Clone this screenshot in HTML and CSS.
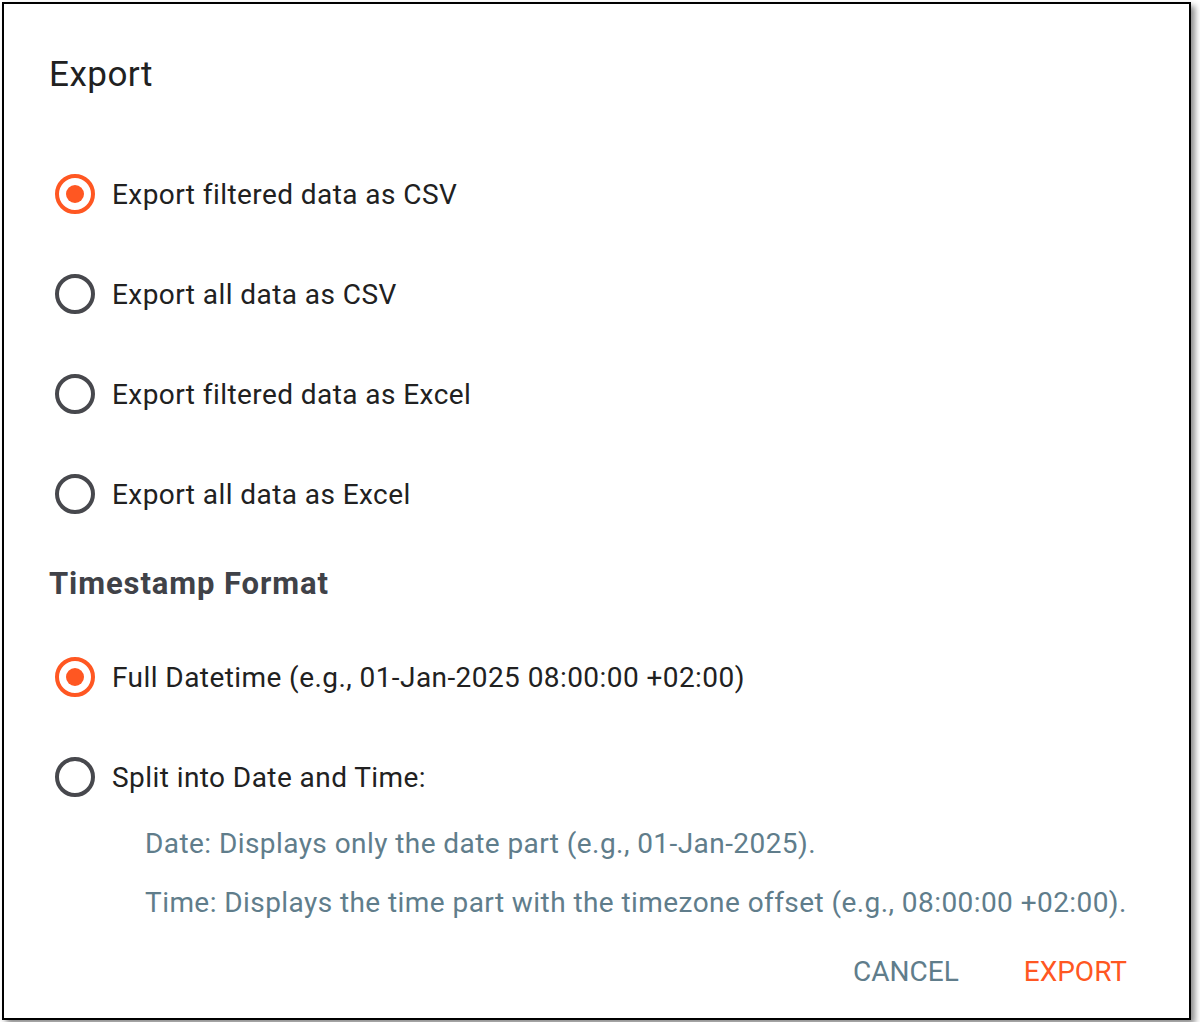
FILE: index.html
```html
<!DOCTYPE html>
<html lang="en">
<head>
  <meta charset="UTF-8" />
  <meta name="viewport" content="width=device-width, initial-scale=1" />
  <title>Export</title>
  <link rel="stylesheet" href="styles.css">
</head>
<body>
  <div class="dialog">
    <h1 class="title">Export</h1>

    <div class="options">
      <label class="option"><span class="radio checked"></span>Export filtered data as CSV</label>
      <label class="option"><span class="radio"></span>Export all data as CSV</label>
      <label class="option"><span class="radio"></span>Export filtered data as Excel</label>
      <label class="option"><span class="radio"></span>Export all data as Excel</label>
    </div>

    <h2 class="subheading">Timestamp Format</h2>

    <div class="options">
      <label class="option"><span class="radio checked"></span>Full Datetime (e.g., 01-Jan-2025 08:00:00 +02:00)</label>
      <label class="option"><span class="radio"></span>Split into Date and Time:</label>
    </div>

    <div class="hint">
      <p>Date: Displays only the date part (e.g., 01-Jan-2025).</p>
      <p>Time: Displays the time part with the timezone offset (e.g., 08:00:00 +02:00).</p>
    </div>

    <div class="actions">
      <button class="btn btn-cancel">CANCEL</button>
      <button class="btn btn-export">EXPORT</button>
    </div>
  </div>
</body>
</html>
```

FILE: styles.css
```css
body {
  margin: 0;
  padding: 2px;
  background: #fff;
  font-family: Roboto, "Liberation Sans", sans-serif;
}
.dialog {
  width: 1189px;
  height: 1018px;
  box-sizing: border-box;
  border: 2px solid #000;
  box-shadow: 4px 4px 6px rgba(0,0,0,0.45);
  background: #fff;
  display: flex;
  flex-direction: column;
}
.title {
  margin: 51px 0 0;
  padding-left: 45px;
  font-size: 35px;
  line-height: 40px;
  letter-spacing: 0.5px;
  font-weight: 400;
  color: #212121;
}
.options {
  display: flex;
  flex-direction: column;
}
.title + .options {
  margin-top: 49px;
}
.option {
  height: 100px;
  display: flex;
  align-items: center;
  gap: 17px;
  padding-left: 51px;
  font-size: 28px;
  letter-spacing: 0.43px;
  color: #212121;
  cursor: pointer;
}
.radio {
  width: 40px;
  height: 40px;
  box-sizing: border-box;
  border: 4px solid #47484d;
  border-radius: 50%;
  display: flex;
  align-items: center;
  justify-content: center;
  flex: none;
}
.radio.checked {
  border-color: #ff5722;
}
.radio.checked::after {
  content: "";
  width: 18px;
  height: 18px;
  border-radius: 50%;
  background: #ff5722;
}
.subheading {
  margin: 20px 0 23px;
  padding-left: 45px;
  font-size: 31px;
  line-height: 40px;
  letter-spacing: 0.9px;
  font-weight: 700;
  color: #404248;
}
.hint {
  padding-left: 141px;
  color: #607d8b;
  font-size: 28px;
  letter-spacing: 0.43px;
}
.hint p {
  margin: 0;
  line-height: 34px;
}
.hint p + p {
  margin-top: 25px;
}
.actions {
  margin-top: auto;
  padding: 0 62px 29px 0;
  display: flex;
  justify-content: flex-end;
  gap: 65px;
}
.btn {
  padding: 0;
  border: none;
  background: none;
  font-family: inherit;
  font-size: 28px;
  line-height: 34px;
  cursor: pointer;
}
.btn-cancel {
  color: #607d8b;
}
.btn-export {
  color: #ff5722;
}
```
